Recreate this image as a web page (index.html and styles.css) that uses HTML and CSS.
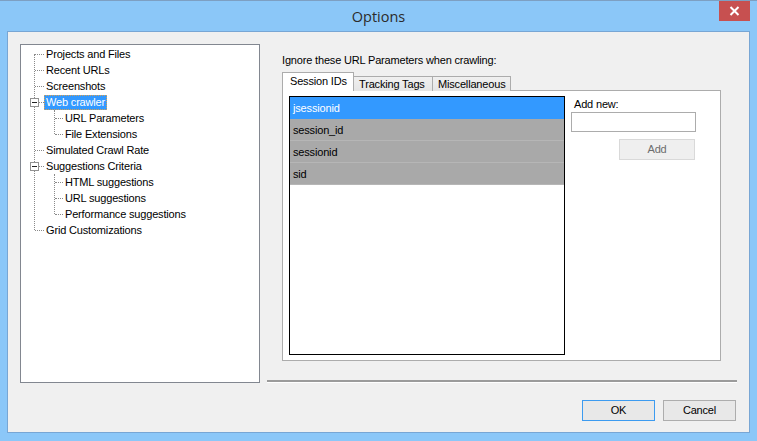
FILE: index.html
```html
<!DOCTYPE html>
<html>
<head>
<meta charset="utf-8">
<link rel="stylesheet" href="styles.css">
</head>
<body>
<div class="window">
  <div class="titlebar">
    <span></span>
    <span class="title">Options</span>
    <span class="close"><svg width="11" height="10" viewBox="0 0 11 10"><path d="M1.5 1 L9.5 9 M9.5 1 L1.5 9" stroke="#fff" stroke-width="2"/></svg></span>
  </div>
  <div class="client">
    <div class="tree">
      <div class="lvl0">
        <div class="row"><span class="lbl">Projects and Files</span></div>
        <div class="row"><span class="lbl">Recent URLs</span></div>
        <div class="row"><span class="lbl">Screenshots</span></div>
        <div class="row"><i class="box"></i><span class="lbl sel">Web crawler</span></div>
        <div class="kids">
          <div class="row"><span class="lbl">URL Parameters</span></div>
          <div class="row"><span class="lbl">File Extensions</span></div>
        </div>
        <div class="row"><span class="lbl">Simulated Crawl Rate</span></div>
        <div class="row"><i class="box"></i><span class="lbl">Suggestions Criteria</span></div>
        <div class="kids">
          <div class="row"><span class="lbl">HTML suggestions</span></div>
          <div class="row"><span class="lbl">URL suggestions</span></div>
          <div class="row"><span class="lbl">Performance suggestions</span></div>
        </div>
        <div class="row"><span class="lbl">Grid Customizations</span></div>
      </div>
    </div>
    <div class="right">
      <div class="group">
        <div class="caption">Ignore these URL Parameters when crawling:</div>
        <div class="tabs">
          <div class="tab active">Session IDs</div>
          <div class="tab">Tracking Tags</div>
          <div class="tab">Miscellaneous</div>
        </div>
        <div class="panel">
          <div class="listbox">
            <div class="item selected">jsessionid</div>
            <div class="item">session_id</div>
            <div class="item">sessionid</div>
            <div class="item">sid</div>
          </div>
          <div class="addcol">
            <div class="addlabel">Add new:</div>
            <div class="textbox"></div>
            <div class="addbtn">Add</div>
          </div>
        </div>
      </div>
      <div class="separator"></div>
      <div class="buttons">
        <div class="btn default">OK</div>
        <div class="btn">Cancel</div>
      </div>
    </div>
  </div>
</div>
</body>
</html>
```
FILE: styles.css
```css
html, body {
  margin: 0;
  padding: 0;
}
body {
  width: 757px;
  height: 441px;
  overflow: hidden;
  font-family: "Liberation Sans", Arial, sans-serif;
  font-size: 11px;
  letter-spacing: -0.17px;
  color: #000;
}
.window {
  width: 757px;
  height: 441px;
  box-sizing: border-box;
  background: #8bc7f8;
  border-top: 1px solid #7d9fc2;
  display: flex;
  flex-direction: column;
}
.titlebar {
  height: 30px;
  display: grid;
  grid-template-columns: 1fr auto 1fr;
  align-items: start;
}
.title {
  font-family: "Open Sans", "Noto Sans", sans-serif;
  font-size: 14.5px;
  letter-spacing: 0;
  color: #2b2b2b;
  line-height: 31px;
}
.close {
  justify-self: end;
  margin-right: 7px;
  width: 31px;
  height: 20px;
  background: #c75050;
  display: flex;
  align-items: center;
  justify-content: center;
}
.client {
  margin: 0 7px 0 7px;
  height: 402px;
  box-sizing: border-box;
  border: 1px solid #78a6d4;
  background: #f0f0f0;
  display: flex;
  align-items: flex-start;
  padding: 12px 0 0 12px;
}
.tree {
  width: 240px;
  height: 339px;
  box-sizing: border-box;
  border: 1px solid #828790;
  background: #fff;
  padding-top: 1px;
}
.lvl0, .kids {
  position: relative;
}
.lvl0::before {
  content: "";
  position: absolute;
  left: 13px;
  top: 8px;
  bottom: 8px;
  border-left: 1px dotted #8a8a8a;
}
.kids::before {
  content: "";
  position: absolute;
  left: 33px;
  top: 0;
  bottom: 8px;
  border-left: 1px dotted #8a8a8a;
}
.row {
  position: relative;
  height: 16px;
  display: flex;
  align-items: center;
  padding-left: 23px;
}
.row::before {
  content: "";
  position: absolute;
  left: 14px;
  top: 8px;
  width: 9px;
  border-top: 1px dotted #8a8a8a;
}
.kids .row {
  padding-left: 42px;
}
.kids .row::before {
  left: 34px;
  width: 8px;
}
.lbl {
  padding: 0 2px;
  line-height: 15px;
  height: 15px;
  white-space: nowrap;
}
.lbl.sel {
  background: #3399ff;
  color: #fff;
  outline: 1px dotted #d9a050;
  outline-offset: -1px;
}
.box {
  position: absolute;
  left: 9px;
  top: 4px;
  width: 9px;
  height: 9px;
  box-sizing: border-box;
  border: 1px solid #919191;
  background: #fff;
  z-index: 1;
}
.box::after {
  content: "";
  position: absolute;
  left: 1px;
  top: 3px;
  width: 5px;
  height: 1px;
  background: #222;
}
.right {
  margin-left: 7px;
  width: 470px;
  display: flex;
  flex-direction: column;
}
.group {
  padding: 0 16px 0 15px;
}
.caption {
  margin-top: 9px;
  line-height: 14px;
  height: 14px;
  margin-bottom: 5px;
  white-space: nowrap;
}
.tabs {
  display: flex;
  align-items: flex-end;
  height: 19px;
  position: relative;
  z-index: 1;
  margin-bottom: -1px;
}
.tab {
  height: 15px;
  box-sizing: border-box;
  border: 1px solid #acacac;
  border-bottom: none;
  background: linear-gradient(#f0f0f0, #e5e5e5);
  padding: 0 5px;
  line-height: 14px;
  margin-left: -1px;
  white-space: nowrap;
}
.tab:nth-child(2) { width: 80px; }
.tab:nth-child(3) { width: 79px; }
.tab.active {
  height: 19px;
  margin-left: 0;
  background: #fff;
  line-height: 17px;
  width: 72px;
  padding: 0 0 0 7px;
}
.panel {
  height: 271px;
  box-sizing: border-box;
  border: 1px solid #acacac;
  background: #fff;
  padding: 5px 0 0 6px;
  display: flex;
  align-items: flex-start;
}
.listbox {
  width: 276px;
  height: 259px;
  box-sizing: border-box;
  border: 1px solid #000;
  background: #fff;
}
.item {
  height: 22px;
  line-height: 23px;
  padding-left: 3px;
  background: #a9a9a9;
  box-sizing: border-box;
  border-bottom: 1px solid #b6b6b6;
}
.item.selected {
  background: #3399ff;
  color: #fff;
  border-bottom-color: #3399ff;
}
.addcol {
  margin-left: 6px;
  display: flex;
  flex-direction: column;
  align-items: flex-start;
}
.addlabel {
  margin-left: 3px;
  line-height: 14px;
  margin-top: 1px;
}
.textbox {
  margin-top: 1px;
  width: 125px;
  height: 20px;
  box-sizing: border-box;
  border: 1px solid #acacac;
  background: #fff;
}
.addbtn {
  margin-top: 7px;
  margin-left: 48px;
  width: 76px;
  height: 21px;
  box-sizing: border-box;
  border: 1px solid #d9d9d9;
  background: #efefef;
  color: #6d6d6d;
  text-align: center;
  line-height: 19px;
}
.separator {
  margin-top: 19px;
  height: 2px;
  background: #9b9b9b;
  border-bottom: 1px solid #fff;
}
.buttons {
  margin-top: 17px;
  display: flex;
  justify-content: flex-end;
  gap: 8px;
  padding-right: 1px;
}
.btn {
  width: 73px;
  height: 21px;
  box-sizing: border-box;
  border: 1px solid #adadad;
  background: #e8e8e8;
  text-align: center;
  line-height: 19px;
}
.btn.default {
  border-color: #3c9bf0;
}
```
